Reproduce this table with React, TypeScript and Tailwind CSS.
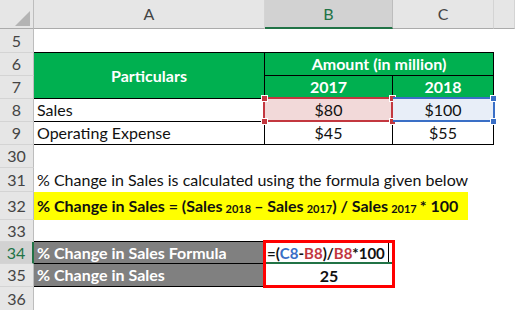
import React from 'react';

const rowHead =
  'flex items-center justify-center bg-[#e6e6e6] border-r border-b border-r-[#bdbdbd] border-b-[#d4d4d4] text-[16px] text-[#444]';
const colHead =
  'flex items-center justify-center bg-[#e6e6e6] border-r border-b border-r-[#d4d4d4] border-b-[#ababab] text-[16px] text-[#444]';
const green = 'bg-[#00b050] text-white font-bold text-[16px] flex items-center justify-center border-r border-b border-black';

const RowHead: React.FC<{ n: number; active?: boolean }> = ({ n, active }) => (
  <div
    className={
      active
        ? 'flex items-center justify-center bg-[#d2d2d2] border-r-2 border-b border-r-[#217346] border-b-[#d4d4d4] text-[16px] text-[#217346]'
        : rowHead
    }
  >
    {n}
  </div>
);

const Handle: React.FC<{ pos: string; color: string }> = ({ pos, color }) => (
  <div className={`absolute w-[7px] h-[7px] border border-white ${pos} ${color}`} />
);

const App: React.FC = () => {
  return (
    <div className="relative w-[515px] h-[310px] overflow-hidden bg-white font-['Lato',sans-serif] text-[#111]">
      <div className="grid grid-cols-[34px_231px_128px_101px_1fr] grid-rows-[29px_24px_23px_23px_23px_23px_23px_24px_28px_22px_22px_23px_24px]">
        {/* column headers */}
        <div className="relative bg-[#e6e6e6] border-r border-b border-r-[#bdbdbd] border-b-[#ababab]">
          <svg className="absolute left-0 top-0" width="33" height="28">
            <polygon points="15,26 30,26 30,11" fill="#b4b4b4" />
          </svg>
        </div>
        <div className={colHead}>A</div>
        <div className="flex items-center justify-center bg-[#d2d2d2] border-r border-b-2 border-r-[#bdbdbd] border-b-[#217346] text-[16px] text-[#217346]">
          B
        </div>
        <div className={colHead}>C</div>
        <div className={colHead}></div>

        {/* row 5 */}
        <RowHead n={5} />
        <div className="border-b border-black" />
        <div className="border-b border-black" />
        <div className="border-b border-black" />
        <div />

        {/* rows 6 & 7 */}
        <RowHead n={6} />
        <div className={`${green} row-span-2`}>Particulars</div>
        <div className={`${green} col-span-2`}>Amount (in million)</div>
        <div className="row-span-2" />
        <RowHead n={7} />
        <div className={green}>2017</div>
        <div className={green}>2018</div>

        {/* row 8 */}
        <RowHead n={8} />
        <div className="flex items-center pl-[3px] text-[16px] border-r border-b border-black">Sales</div>
        <div className="relative flex items-center justify-center text-[16px] bg-[#f2d9d9] border-r border-b border-black">
          $80
          <div className="absolute -left-[2px] -top-[2px] w-[130px] h-[25px] border-2 border-[#c3373f]" />
          <Handle pos="-left-[4px] -top-[4px]" color="bg-[#c3373f]" />
          <Handle pos="-right-[4px] -top-[4px]" color="bg-[#c3373f]" />
          <Handle pos="-left-[4px] -bottom-[4px]" color="bg-[#c3373f]" />
          <Handle pos="-right-[4px] -bottom-[4px]" color="bg-[#c3373f]" />
        </div>
        <div className="relative flex items-center justify-center text-[16px] bg-[#e8eef8] border-r border-b border-black">
          $100
          <div className="absolute left-0 -top-[2px] w-[102px] h-[25px] border-2 border-l-0 border-[#3a6fc6]" />
          <Handle pos="-right-[4px] -top-[4px]" color="bg-[#3a6fc6]" />
          <Handle pos="-right-[4px] -bottom-[4px]" color="bg-[#3a6fc6]" />
        </div>
        <div />

        {/* row 9 */}
        <RowHead n={9} />
        <div className="flex items-center pl-[3px] text-[16px] border-r border-b border-black">Operating Expense</div>
        <div className="flex items-center justify-center text-[16px] border-r border-b border-black">$45</div>
        <div className="flex items-center justify-center text-[16px] border-r border-b border-black">$55</div>
        <div />

        {/* row 30 */}
        <RowHead n={30} />
        <div className="col-span-4" />

        {/* row 31 */}
        <RowHead n={31} />
        <div className="col-span-4 flex items-center pl-[3px] text-[16px] whitespace-nowrap">
          % Change in Sales is calculated using the formula given below
        </div>

        {/* row 32 */}
        <RowHead n={32} />
        <div className="col-span-4 flex">
          <div className="w-[434px] bg-[#ffff00] flex items-center pl-[3px] text-[16px] font-bold whitespace-nowrap">
            % Change in Sales = (Sales <sub className="text-[11px] mx-[3px]">2018</sub> – Sales{' '}
            <sub className="text-[11px] ml-[3px]">2017</sub>) / Sales <sub className="text-[11px] mx-[3px]">2017</sub>{' '}
            * 100
          </div>
        </div>

        {/* row 33 */}
        <RowHead n={33} />
        <div className="border-b border-black" />
        <div className="col-span-3" />

        {/* row 34 */}
        <RowHead n={34} active />
        <div className="flex items-center pl-[3px] bg-[#808080] text-white font-bold text-[16px] border-r border-b border-black">
          % Change in Sales Formula
        </div>
        <div className="relative flex items-center pl-[2px] font-bold text-[15px] whitespace-nowrap">
          <span>=(</span>
          <span className="text-[#3a6fc6]">C8</span>
          <span>-</span>
          <span className="text-[#c3373f]">B8</span>
          <span>)/</span>
          <span className="text-[#c3373f]">B8</span>
          <span>*100</span>
          <span className="ml-[3px] w-px h-[20px] bg-black" />
          <div className="absolute left-[1px] right-0 bottom-0 h-[2px] bg-[#217346]" />
        </div>
        <div className="col-span-2" />

        {/* row 35 */}
        <RowHead n={35} />
        <div className="flex items-center pl-[3px] bg-[#808080] text-white font-bold text-[16px] border-r border-b border-black">
          % Change in Sales
        </div>
        <div className="flex items-center justify-center font-bold text-[16px]">25</div>
        <div className="col-span-2" />

        {/* row 36 */}
        <RowHead n={36} />
        <div className="col-span-4" />
      </div>

      {/* red annotation box */}
      <div className="absolute left-[263px] top-[240px] w-[132px] h-[48px] border-[3px] border-[#ff0000]" />
    </div>
  );
};

export default App;
